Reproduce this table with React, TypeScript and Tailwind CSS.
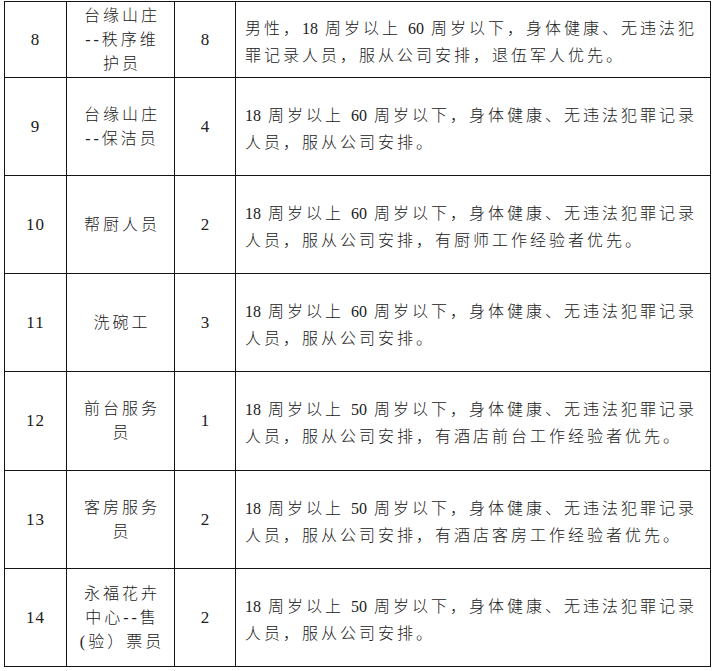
import React from "react";

type Row = {
    no: string;
    post: string[];
    count: string;
    desc: string[];
    h: string;
};

const rows: Row[] = [
    {
        no: "8",
        post: ["台缘山庄", "--秩序维", "护员"],
        count: "8",
        desc: ["男性，18 周岁以上 60 周岁以下，身体健康、无违法犯", "罪记录人员，服从公司安排，退伍军人优先。"],
        h: "h-[76px]",
    },
    {
        no: "9",
        post: ["台缘山庄", "--保洁员"],
        count: "4",
        desc: ["18 周岁以上 60 周岁以下，身体健康、无违法犯罪记录", "人员，服从公司安排。"],
        h: "h-[98px]",
    },
    {
        no: "10",
        post: ["帮厨人员"],
        count: "2",
        desc: ["18 周岁以上 60 周岁以下，身体健康、无违法犯罪记录", "人员，服从公司安排，有厨师工作经验者优先。"],
        h: "h-[98px]",
    },
    {
        no: "11",
        post: ["洗碗工"],
        count: "3",
        desc: ["18 周岁以上 60 周岁以下，身体健康、无违法犯罪记录", "人员，服从公司安排。"],
        h: "h-[98px]",
    },
    {
        no: "12",
        post: ["前台服务", "员"],
        count: "1",
        desc: ["18 周岁以上 50 周岁以下，身体健康、无违法犯罪记录", "人员，服从公司安排，有酒店前台工作经验者优先。"],
        h: "h-[99px]",
    },
    {
        no: "13",
        post: ["客房服务", "员"],
        count: "2",
        desc: ["18 周岁以上 50 周岁以下，身体健康、无违法犯罪记录", "人员，服从公司安排，有酒店客房工作经验者优先。"],
        h: "h-[98px]",
    },
    {
        no: "14",
        post: ["永福花卉", "中心--售", "(验）票员"],
        count: "2",
        desc: ["18 周岁以上 50 周岁以下，身体健康、无违法犯罪记录", "人员，服从公司安排。"],
        h: "h-[98px]",
    },
];

// digits keep normal spacing, CJK gets the wide Word-style spacing
const Spaced = ({ text }: { text: string }) => {
    const parts = text.split(/(\d+)/);
    return (
        <>
            {parts.map((p, i) =>
                /^\d+$/.test(p) ? (
                    <span key={i} className="tracking-normal">
                        {p}
                    </span>
                ) : (
                    <React.Fragment key={i}>{p}</React.Fragment>
                )
            )}
        </>
    );
};

export default function App() {
    return (
        <div
            className="min-h-[671px] w-[716px] bg-white pl-[4px] pt-[1px] font-light text-[#202020]"
            style={{ fontFamily: '"Liberation Serif", "Noto Sans CJK SC", serif' }}
        >
            <div className="w-[707px] border-l border-t border-[#141414]">
                {rows.map((r) => (
                    <div key={r.no} className={`flex border-b border-[#141414] ${r.h}`}>
                        <div className="flex w-[62px] shrink-0 items-center justify-center border-r border-[#141414] text-[17px] tracking-[1px]">
                            {r.no}
                        </div>
                        <div className="flex w-[108px] shrink-0 flex-col items-center justify-center border-r border-[#141414] text-[16px] leading-[24px] tracking-[3px]">
                            {r.post.map((l) => (
                                <div key={l} className="whitespace-nowrap pl-[3px]">
                                    {l}
                                </div>
                            ))}
                        </div>
                        <div className="flex w-[61px] shrink-0 items-center justify-center border-r border-[#141414] text-[17px]">
                            {r.count}
                        </div>
                        <div className="flex flex-1 flex-col justify-center border-r border-[#141414] pl-[9px] pt-[4px] text-[16px] leading-[27px] tracking-[3px]">
                            {r.desc.map((l) => (
                                <div key={l} className="whitespace-nowrap">
                                    <Spaced text={l} />
                                </div>
                            ))}
                        </div>
                    </div>
                ))}
            </div>
        </div>
    );
}
